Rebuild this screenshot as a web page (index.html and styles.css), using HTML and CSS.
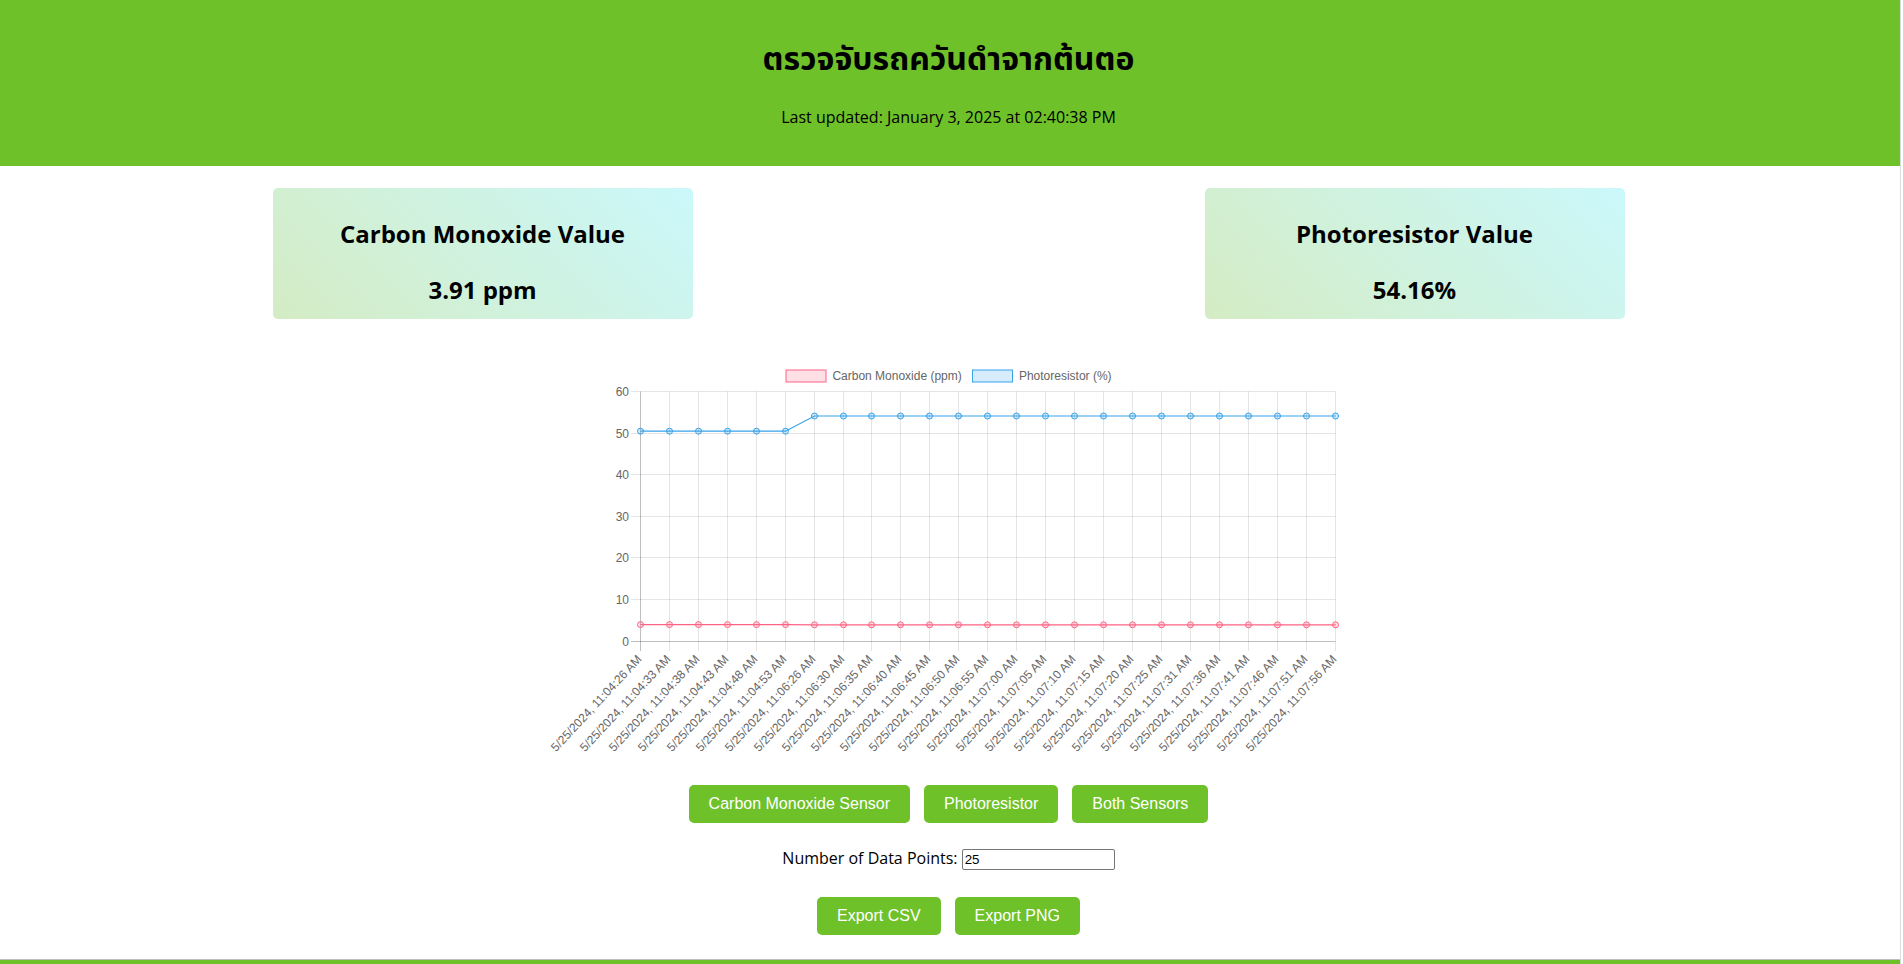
FILE: index.html
```html
<!DOCTYPE html>
<html lang="th">
<head>
<meta charset="utf-8">
<title>ตรวจจับรถควันดำจากต้นตอ</title>
<link rel="stylesheet" href="styles.css">
</head>
<body>
<div class="page">
  <header class="header">
    <h1>ตรวจจับรถควันดำจากต้นตอ</h1>
    <p>Last updated: January 3, 2025 at 02:40:38 PM</p>
  </header>
  <main class="main">
    <section class="cards">
      <div class="card">
        <h2>Carbon Monoxide Value</h2>
        <p class="value">3.91 ppm</p>
      </div>
      <div class="card">
        <h2>Photoresistor Value</h2>
        <p class="value">54.16%</p>
      </div>
    </section>

    <svg class="chart" width="817" height="410" viewBox="0 0 817 410" xmlns="http://www.w3.org/2000/svg">
      <!-- legend -->
      <g class="legend">
        <rect x="246" y="15" width="40" height="12" fill="rgba(255,99,132,0.2)" stroke="rgb(255,99,132)" stroke-width="1"/>
        <text x="292.4" y="21">Carbon Monoxide (ppm)</text>
        <rect x="432.5" y="15" width="40" height="12" fill="rgba(54,162,235,0.2)" stroke="rgb(54,162,235)" stroke-width="1"/>
        <text x="478.9" y="21">Photoresistor (%)</text>
      </g>
      <!-- horizontal grid -->
      <g class="grid">
        <line x1="91" y1="36.5" x2="795.5" y2="36.5"/>
        <line x1="91" y1="78.5" x2="795.5" y2="78.5"/>
        <line x1="91" y1="119.5" x2="795.5" y2="119.5"/>
        <line x1="91" y1="161.5" x2="795.5" y2="161.5"/>
        <line x1="91" y1="202.5" x2="795.5" y2="202.5"/>
        <line x1="91" y1="244.5" x2="795.5" y2="244.5"/>
      </g>
      <!-- vertical grid -->
      <g class="grid">
        <line x1="129.5" y1="36.5" x2="129.5" y2="296"/>
        <line x1="158.5" y1="36.5" x2="158.5" y2="296"/>
        <line x1="187.5" y1="36.5" x2="187.5" y2="296"/>
        <line x1="216.5" y1="36.5" x2="216.5" y2="296"/>
        <line x1="245.5" y1="36.5" x2="245.5" y2="296"/>
        <line x1="274.5" y1="36.5" x2="274.5" y2="296"/>
        <line x1="303.5" y1="36.5" x2="303.5" y2="296"/>
        <line x1="331.5" y1="36.5" x2="331.5" y2="296"/>
        <line x1="360.5" y1="36.5" x2="360.5" y2="296"/>
        <line x1="389.5" y1="36.5" x2="389.5" y2="296"/>
        <line x1="418.5" y1="36.5" x2="418.5" y2="296"/>
        <line x1="447.5" y1="36.5" x2="447.5" y2="296"/>
        <line x1="476.5" y1="36.5" x2="476.5" y2="296"/>
        <line x1="505.5" y1="36.5" x2="505.5" y2="296"/>
        <line x1="534.5" y1="36.5" x2="534.5" y2="296"/>
        <line x1="563.5" y1="36.5" x2="563.5" y2="296"/>
        <line x1="592.5" y1="36.5" x2="592.5" y2="296"/>
        <line x1="621.5" y1="36.5" x2="621.5" y2="296"/>
        <line x1="650.5" y1="36.5" x2="650.5" y2="296"/>
        <line x1="679.5" y1="36.5" x2="679.5" y2="296"/>
        <line x1="708.5" y1="36.5" x2="708.5" y2="296"/>
        <line x1="737.5" y1="36.5" x2="737.5" y2="296"/>
        <line x1="766.5" y1="36.5" x2="766.5" y2="296"/>
        <line x1="795.5" y1="36.5" x2="795.5" y2="296"/>
      </g>
      <!-- zero lines -->
      <g class="zero">
        <line x1="91" y1="286.5" x2="795.5" y2="286.5"/>
        <line x1="100.5" y1="36.5" x2="100.5" y2="296"/>
      </g>
      <!-- y labels -->
      <g class="ylab">
        <text x="89" y="37">60</text>
        <text x="89" y="79">50</text>
        <text x="89" y="120">40</text>
        <text x="89" y="162">30</text>
        <text x="89" y="203">20</text>
        <text x="89" y="245">10</text>
        <text x="89" y="287">0</text>
      </g>
      <!-- x labels -->
      <g class="xlab">
        <text x="99.5" y="302" transform="rotate(-47 99.5 302)">5/25/2024, 11:04:26 AM</text>
        <text x="128.5" y="302" transform="rotate(-47 128.5 302)">5/25/2024, 11:04:33 AM</text>
        <text x="157.5" y="302" transform="rotate(-47 157.5 302)">5/25/2024, 11:04:38 AM</text>
        <text x="186.5" y="302" transform="rotate(-47 186.5 302)">5/25/2024, 11:04:43 AM</text>
        <text x="215.5" y="302" transform="rotate(-47 215.5 302)">5/25/2024, 11:04:48 AM</text>
        <text x="244.5" y="302" transform="rotate(-47 244.5 302)">5/25/2024, 11:04:53 AM</text>
        <text x="273.5" y="302" transform="rotate(-47 273.5 302)">5/25/2024, 11:06:26 AM</text>
        <text x="302.5" y="302" transform="rotate(-47 302.5 302)">5/25/2024, 11:06:30 AM</text>
        <text x="330.5" y="302" transform="rotate(-47 330.5 302)">5/25/2024, 11:06:35 AM</text>
        <text x="359.5" y="302" transform="rotate(-47 359.5 302)">5/25/2024, 11:06:40 AM</text>
        <text x="388.5" y="302" transform="rotate(-47 388.5 302)">5/25/2024, 11:06:45 AM</text>
        <text x="417.5" y="302" transform="rotate(-47 417.5 302)">5/25/2024, 11:06:50 AM</text>
        <text x="446.5" y="302" transform="rotate(-47 446.5 302)">5/25/2024, 11:06:55 AM</text>
        <text x="475.5" y="302" transform="rotate(-47 475.5 302)">5/25/2024, 11:07:00 AM</text>
        <text x="504.5" y="302" transform="rotate(-47 504.5 302)">5/25/2024, 11:07:05 AM</text>
        <text x="533.5" y="302" transform="rotate(-47 533.5 302)">5/25/2024, 11:07:10 AM</text>
        <text x="562.5" y="302" transform="rotate(-47 562.5 302)">5/25/2024, 11:07:15 AM</text>
        <text x="591.5" y="302" transform="rotate(-47 591.5 302)">5/25/2024, 11:07:20 AM</text>
        <text x="620.5" y="302" transform="rotate(-47 620.5 302)">5/25/2024, 11:07:25 AM</text>
        <text x="649.5" y="302" transform="rotate(-47 649.5 302)">5/25/2024, 11:07:31 AM</text>
        <text x="678.5" y="302" transform="rotate(-47 678.5 302)">5/25/2024, 11:07:36 AM</text>
        <text x="707.5" y="302" transform="rotate(-47 707.5 302)">5/25/2024, 11:07:41 AM</text>
        <text x="736.5" y="302" transform="rotate(-47 736.5 302)">5/25/2024, 11:07:46 AM</text>
        <text x="765.5" y="302" transform="rotate(-47 765.5 302)">5/25/2024, 11:07:51 AM</text>
        <text x="794.5" y="302" transform="rotate(-47 794.5 302)">5/25/2024, 11:07:56 AM</text>
      </g>
      <!-- red series -->
      <polyline class="line-red" points="100.5,269.6 129.5,269.6 158.5,269.6 187.5,269.6 216.5,269.6 245.5,269.6 274.5,269.8 303.5,269.8 331.5,269.8 360.5,269.8 389.5,269.8 418.5,269.8 447.5,269.8 476.5,269.8 505.5,269.8 534.5,269.8 563.5,269.8 592.5,269.8 621.5,269.8 650.5,269.8 679.5,269.8 708.5,269.8 737.5,269.8 766.5,269.8 795.5,269.8"/>
      <!-- blue series -->
      <polyline class="line-blue" points="100.5,76.2 129.5,76.2 158.5,76.2 187.5,76.2 216.5,76.2 245.5,76.2 274.5,61 303.5,61 331.5,61 360.5,61 389.5,61 418.5,61 447.5,61 476.5,61 505.5,61 534.5,61 563.5,61 592.5,61 621.5,61 650.5,61 679.5,61 708.5,61 737.5,61 766.5,61 795.5,61"/>
      <g class="pt-red">
        <circle cx="100.5" cy="269.6" r="3"/><circle cx="129.5" cy="269.6" r="3"/><circle cx="158.5" cy="269.6" r="3"/><circle cx="187.5" cy="269.6" r="3"/><circle cx="216.5" cy="269.6" r="3"/><circle cx="245.5" cy="269.6" r="3"/>
        <circle cx="274.5" cy="269.8" r="3"/><circle cx="303.5" cy="269.8" r="3"/><circle cx="331.5" cy="269.8" r="3"/><circle cx="360.5" cy="269.8" r="3"/><circle cx="389.5" cy="269.8" r="3"/><circle cx="418.5" cy="269.8" r="3"/><circle cx="447.5" cy="269.8" r="3"/><circle cx="476.5" cy="269.8" r="3"/><circle cx="505.5" cy="269.8" r="3"/><circle cx="534.5" cy="269.8" r="3"/><circle cx="563.5" cy="269.8" r="3"/><circle cx="592.5" cy="269.8" r="3"/><circle cx="621.5" cy="269.8" r="3"/><circle cx="650.5" cy="269.8" r="3"/><circle cx="679.5" cy="269.8" r="3"/><circle cx="708.5" cy="269.8" r="3"/><circle cx="737.5" cy="269.8" r="3"/><circle cx="766.5" cy="269.8" r="3"/><circle cx="795.5" cy="269.8" r="3"/>
      </g>
      <g class="pt-blue">
        <circle cx="100.5" cy="76.2" r="3"/><circle cx="129.5" cy="76.2" r="3"/><circle cx="158.5" cy="76.2" r="3"/><circle cx="187.5" cy="76.2" r="3"/><circle cx="216.5" cy="76.2" r="3"/><circle cx="245.5" cy="76.2" r="3"/>
        <circle cx="274.5" cy="61" r="3"/><circle cx="303.5" cy="61" r="3"/><circle cx="331.5" cy="61" r="3"/><circle cx="360.5" cy="61" r="3"/><circle cx="389.5" cy="61" r="3"/><circle cx="418.5" cy="61" r="3"/><circle cx="447.5" cy="61" r="3"/><circle cx="476.5" cy="61" r="3"/><circle cx="505.5" cy="61" r="3"/><circle cx="534.5" cy="61" r="3"/><circle cx="563.5" cy="61" r="3"/><circle cx="592.5" cy="61" r="3"/><circle cx="621.5" cy="61" r="3"/><circle cx="650.5" cy="61" r="3"/><circle cx="679.5" cy="61" r="3"/><circle cx="708.5" cy="61" r="3"/><circle cx="737.5" cy="61" r="3"/><circle cx="766.5" cy="61" r="3"/><circle cx="795.5" cy="61" r="3"/>
      </g>
    </svg>

    <div class="btn-row">
      <button class="btn" type="button">Carbon Monoxide Sensor</button>
      <button class="btn" type="button">Photoresistor</button>
      <button class="btn" type="button">Both Sensors</button>
    </div>

    <div class="points">
      <label for="dataPoints">Number of Data Points:</label>
      <input id="dataPoints" type="number" value="25" class="points-input">
    </div>

    <div class="btn-row export-row">
      <button class="btn" type="button">Export CSV</button>
      <button class="btn" type="button">Export PNG</button>
    </div>
  </main>
  <footer class="footer"></footer>
</div>
</body>
</html>
```

FILE: styles.css
```css
html, body {
  margin: 0;
  padding: 0;
  background: #ffffff;
}

body {
  font-family: "Open Sans", "Noto Sans Thai", "Noto Sans", sans-serif;
  color: #000;
}

.page {
  width: 1900px;
  border-right: 1px solid #dcdcdc;
}

.header {
  background: #6fc12a;
  padding: 20px 3px 22px 0;
  text-align: center;
}

.header h1 {
  margin: 16px 0 0;
  font-size: 32px;
  line-height: 44px;
  font-weight: 700;
}

.header p {
  margin: 26px 0 16px;
  font-size: 16px;
  line-height: 22px;
}

.main {
  padding-right: 3px;
}

.cards {
  width: 1352px;
  margin: 22px auto 0;
  display: flex;
  justify-content: space-between;
}

.card {
  width: 420px;
  height: 131px;
  box-sizing: border-box;
  padding: 10px 20px;
  border-radius: 5px;
  background: linear-gradient(45deg, #d4ecc4, #cbf8fb);
  text-align: center;
}

.card h2 {
  margin: 20px 0 0;
  font-size: 24px;
  line-height: 32px;
  font-weight: 700;
}

.card .value {
  margin: 24px 0 0;
  font-size: 24px;
  line-height: 32px;
  font-weight: 700;
}

.chart {
  display: block;
  width: 817px;
  height: 410px;
  margin: 36px auto 0;
  font-family: "Liberation Sans", Arial, Helvetica, sans-serif;
  font-size: 12px;
}

.chart text {
  fill: #666666;
}

.legend text {
  dominant-baseline: central;
}

.grid line {
  stroke: rgba(0, 0, 0, 0.1);
  stroke-width: 1;
}

.zero line {
  stroke: rgba(0, 0, 0, 0.25);
  stroke-width: 1;
}

.ylab text {
  text-anchor: end;
  dominant-baseline: central;
}

.xlab text {
  text-anchor: end;
  dominant-baseline: central;
}

.line-red {
  fill: none;
  stroke: rgb(255, 99, 132);
  stroke-width: 1.2;
}

.line-blue {
  fill: none;
  stroke: rgb(54, 162, 235);
  stroke-width: 1.2;
}

.pt-red circle {
  fill: rgba(255, 99, 132, 0.2);
  stroke: rgb(255, 99, 132);
  stroke-width: 1;
}

.pt-blue circle {
  fill: rgba(54, 162, 235, 0.2);
  stroke: rgb(54, 162, 235);
  stroke-width: 1;
}

.btn-row {
  display: flex;
  justify-content: center;
  gap: 14px;
  margin-top: 20px;
}

.btn {
  background: #6fc12a;
  color: #ffffff;
  border: none;
  border-radius: 5px;
  padding: 10px 20px;
  font-family: "Liberation Sans", Arial, Helvetica, sans-serif;
  font-size: 16px;
  line-height: 18px;
  cursor: pointer;
}

.points {
  margin-top: 24px;
  text-align: center;
  font-size: 16px;
  line-height: 22px;
}

.points-input {
  box-sizing: border-box;
  width: 153px;
  height: 21px;
  font-family: "Liberation Sans", Arial, sans-serif;
  font-size: 13.33px;
  padding: 1px 2px;
  border: 1px solid #767676;
  border-radius: 2px;
  -moz-appearance: textfield;
}

.points-input::-webkit-outer-spin-button,
.points-input::-webkit-inner-spin-button {
  -webkit-appearance: none;
  margin: 0;
}

.export-row {
  margin-top: 27px;
}

.footer {
  margin-top: 24px;
  border-top: 1px solid #bdbdbd;
  background: #6fc12a;
  height: 40px;
}
```
